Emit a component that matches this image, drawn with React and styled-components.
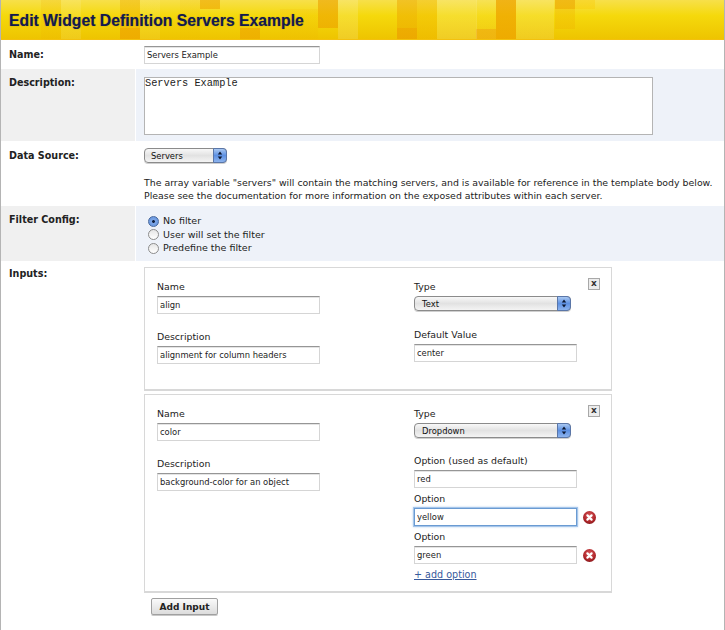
import React from 'react';
import styled, { createGlobalStyle } from 'styled-components';

const Global = createGlobalStyle`
  html, body { margin: 0; padding: 0; background: #fff; }
  body { font-family: "DejaVu Sans", Verdana, sans-serif; font-size: 9.4px; color: #222; }
`;

const blocks = [
  // x, y, w, h, colour
  [41, 0, 20, 39, 'rgba(240,175,0,0.18)'],
  [61, 0, 20, 39, 'rgba(255,255,255,0.1)'],
  [120, 0, 20, 28, 'rgba(240,170,0,0.4)'],
  [120, 28, 20, 11, 'rgba(238,160,0,0.65)'],
  [140, 0, 20, 39, 'rgba(255,255,255,0.08)'],
  [180, 0, 20, 39, 'rgba(240,175,0,0.12)'],
  [200, 0, 20, 9, 'rgba(238,165,0,0.6)'],
  [240, 28, 20, 11, 'rgba(238,160,0,0.55)'],
  [280, 9, 38, 30, 'rgba(240,175,0,0.14)'],
  [318, 0, 20, 28, 'rgba(236,160,0,0.6)'],
  [338, 0, 20, 39, 'rgba(255,255,255,0.14)'],
  [397, 0, 20, 28, 'rgba(236,165,0,0.5)'],
  [397, 28, 20, 11, 'rgba(236,155,0,0.65)'],
  [417, 0, 20, 39, 'rgba(240,175,0,0.35)'],
  [437, 0, 40, 39, 'rgba(255,255,255,0.14)'],
  [476, 0, 20, 39, 'rgba(255,255,255,0.06)'],
  [476, 29, 20, 10, 'rgba(238,160,0,0.55)'],
  [496, 0, 20, 39, 'rgba(238,160,0,0.7)'],
  [516, 0, 38, 39, 'rgba(255,255,255,0.12)'],
  [555, 0, 20, 9, 'rgba(238,170,0,0.7)'],
  [555, 9, 20, 20, 'rgba(240,180,0,0.35)'],
  [575, 0, 20, 9, 'rgba(250,200,0,0.35)'],
];
const bannerLayers = blocks
  .map(([x, y, w, h, c]) => `linear-gradient(${c}, ${c}) ${x - 1}px ${y}px / ${w}px ${h}px no-repeat`)
  .join(',');

const Page = styled.div`
  width: 725px;
  height: 630px;
  overflow: hidden;
  box-sizing: border-box;
  border-left: 1px solid #b4b4b4;
  border-right: 1px solid #b4b4b4;
`;
const Banner = styled.header`
  height: 40px;
  box-sizing: border-box;
  padding: 11px 0 0 8px;
  background: ${bannerLayers}, linear-gradient(#f7e04a 0, #f5d90c 40%, #eec400 100%);
  border-bottom: 1px solid #f3c10e;
`;
const Title = styled.h1`
  margin: 0;
  font: bold 15.75px/20px "Liberation Sans", Arial, sans-serif;
  color: #141a4e;
  text-shadow: 0 0 1px rgba(20, 26, 78, 0.45);
`;
const Row = styled.div`
  display: grid;
  grid-template-columns: 134px 1fr;
  column-gap: 1px;
  height: ${p => p.$h}px;
`;
const Label = styled.div`
  padding: ${p => p.$top || 9}px 0 0 8px;
  font-weight: bold;
  font-size: 9.6px;
  line-height: 12px;
  color: #222;
  background: ${p => (p.$alt ? '#f0f0f0' : '#fff')};
`;
const Value = styled.div`
  padding: ${p => p.$top || 0}px 0 0 8px;
  background: ${p => (p.$alt ? '#eef2f9' : '#fff')};
  box-sizing: border-box;
`;
const TextBox = styled.input`
  display: block;
  box-sizing: border-box;
  width: ${p => p.$w || 163}px;
  height: 18px;
  padding: 0 0 0 2px;
  margin: 0;
  font: 8.4px "DejaVu Sans", sans-serif;
  color: #222;
  background: #fff;
  outline: none;
  border: 1px solid #d5d5d5;
  border-top: 1px solid #969696;
  box-shadow: inset 0 1px 0 #e4e4e4;
  ${p => p.$focus && `
    border: 1px solid #6a9bd2;
    box-shadow: 0 0 0 1px #a5c5ea, 0 0 2px 1px #b9d3f0;
  `}
`;
const Area = styled.div`
  width: 509px;
  height: 58px;
  box-sizing: border-box;
  background: #fff;
  border: 1px solid #b4b4b4;
  font: 10.3px/11px "Liberation Mono", "DejaVu Sans Mono", monospace;
  color: #222;
`;
const Select = styled.div`
  position: relative;
  width: ${p => p.$w}px;
  height: 15px;
  box-sizing: border-box;
  padding-left: ${p => p.$pad || 7}px;
  font-size: 8.4px;
  line-height: 14px;
  color: #111;
  border: 1px solid #8b8b8b;
  border-radius: 4px;
  background: linear-gradient(#f8f8f8 0, #e2e2e2 50%, #f4f4f4 100%);
  box-shadow: 0 1px 0 #cfcfcf;
`;
const SelectCap = styled.span`
  position: absolute;
  top: -1px;
  right: -1px;
  bottom: -1px;
  width: 14px;
  border-radius: 0 4px 4px 0;
  background: linear-gradient(#a9c8f2 0, #5d90e2 50%, #8db4ee 100%);
  border: 1px solid #5a76a8;
  box-sizing: border-box;
  display: flex;
  align-items: center;
  justify-content: center;
`;
const Help = styled.p`
  margin: 13px 0 0;
  font-size: 9.38px;
  line-height: 13px;
  white-space: nowrap;
  color: #222;
`;
const RadioList = styled.div`
  display: flex;
  flex-direction: column;
`;
const RadioRow = styled.div`
  display: flex;
  align-items: center;
  height: 13.5px;
  padding-left: 4px;
  gap: 4px;
  font-size: 9.5px;
  color: #222;
`;
const Dot = styled.span`
  width: 11px;
  height: 11px;
  box-sizing: border-box;
  border-radius: 50%;
  border: 1px solid ${p => (p.$on ? '#48689c' : '#8c8c8c')};
  background: ${p => (p.$on ? 'radial-gradient(circle, #102040 0, #102040 18%, #7fa7e6 26%, #5c8fdf 100%)' : 'linear-gradient(#e6e6e6, #fff)')};
  margin-top: 1px;
`;
const Card = styled.section`
  position: relative;
  width: 468px;
  height: ${p => p.$h}px;
  box-sizing: border-box;
  margin-bottom: 3px;
  padding: 13px 0 0 12px;
  display: grid;
  grid-template-columns: 257px 1fr;
  background: #fff;
  border: 1px solid #d8d8d8;
  border-bottom-width: 2px;
`;
const Col = styled.div`
  display: flex;
  flex-direction: column;
`;
const Field = styled.div`
  margin-bottom: ${p => p.$mb ?? 17}px;
`;
const FieldLabel = styled.div`
  font-size: 9.4px;
  line-height: 12px;
  margin-bottom: 3px;
  color: #222;
`;
const FieldLine = styled.div`
  display: flex;
  align-items: center;
  gap: 6px;
`;
const CloseBox = styled.span`
  position: absolute;
  top: 10px;
  right: 11px;
  width: 12px;
  height: 12px;
  box-sizing: border-box;
  border: 1px solid #a8a8a8;
  background: #ececec;
  font-size: 9px;
  font-weight: bold;
  line-height: 9px;
  text-align: center;
  color: #333;
`;
const AddLink = styled.a`
  font-size: 9.6px;
  line-height: 12px;
  color: #385a9c;
  text-decoration: underline;
  margin-top: 5px;
`;
const AddButton = styled.button`
  display: block;
  margin: 5px 0 0 7px;
  width: 67px;
  height: 17px;
  padding: 0;
  font: bold 9px "DejaVu Sans", sans-serif;
  color: #222;
  background: linear-gradient(#fafafa, #dcdcdc);
  border: 1px solid #a0a0a0;
  border-radius: 2px;
  box-shadow: 0 1px 0 #c8c8c8;
`;

const Stepper = () => (
  <SelectCap>
    <svg width="6" height="9" viewBox="0 0 6 9">
      <path d="M3 0.5 L5.2 3.5 H0.8 Z M3 8.5 L5.2 5.5 H0.8 Z" fill="#0c1730" />
    </svg>
  </SelectCap>
);

const Remove = () => (
  <svg width="13" height="13" viewBox="0 0 13 13">
    <defs>
      <radialGradient id="rm" cx="50%" cy="35%" r="70%">
        <stop offset="0" stopColor="#d8565a" />
        <stop offset="0.7" stopColor="#ac2428" />
        <stop offset="1" stopColor="#7e1518" />
      </radialGradient>
    </defs>
    <circle cx="6.5" cy="6.5" r="6.5" fill="url(#rm)" />
    <path d="M4.4 4.4 L8.6 8.6 M8.6 4.4 L4.4 8.6" stroke="#fff" strokeWidth="2.2" strokeLinecap="round" />
  </svg>
);

export default function App() {
  return (
    <Page>
      <Global />
      <Banner><Title>Edit Widget Definition Servers Example</Title></Banner>
      <Row $h={29}>
        <Label>Name:</Label>
        <Value $top={6}><TextBox $w={176} readOnly value="Servers Example" /></Value>
      </Row>
      <Row $h={72}>
        <Label $alt $top={8}>Description:</Label>
        <Value $alt $top={8}><Area>Servers Example</Area></Value>
      </Row>
      <Row $h={65}>
        <Label $top={9}>Data Source:</Label>
        <Value $top={7}>
          <Select $w={83} $pad={6}>Servers<Stepper /></Select>
          <Help>The array variable "servers" will contain the matching servers, and is available for reference in the template body below.<br />Please see the documentation for more information on the exposed attributes within each server.</Help>
        </Value>
      </Row>
      <Row $h={55}>
        <Label $alt $top={8}>Filter Config:</Label>
        <Value $alt $top={8}>
          <RadioList>
            <RadioRow><Dot $on />No filter</RadioRow>
            <RadioRow><Dot />User will set the filter</RadioRow>
            <RadioRow><Dot />Predefine the filter</RadioRow>
          </RadioList>
        </Value>
      </Row>
      <Row $h={369}>
        <Label $top={7}>Inputs:</Label>
        <Value $top={6}>
          <Card $h={124}>
            <CloseBox>x</CloseBox>
            <Col>
              <Field><FieldLabel>Name</FieldLabel><TextBox readOnly value="align" /></Field>
              <Field><FieldLabel>Description</FieldLabel><TextBox readOnly value="alignment for column headers" /></Field>
            </Col>
            <Col>
              <Field $mb={18}><FieldLabel>Type</FieldLabel><Select $w={157}>Text<Stepper /></Select></Field>
              <Field><FieldLabel>Default Value</FieldLabel><TextBox readOnly value="center" /></Field>
            </Col>
          </Card>
          <Card $h={199}>
            <CloseBox>x</CloseBox>
            <Col>
              <Field><FieldLabel>Name</FieldLabel><TextBox readOnly value="color" /></Field>
              <Field><FieldLabel>Description</FieldLabel><TextBox readOnly value="background-color for an object" /></Field>
            </Col>
            <Col>
              <Field $mb={17}><FieldLabel>Type</FieldLabel><Select $w={157}>Dropdown<Stepper /></Select></Field>
              <Field $mb={5}><FieldLabel>Option (used as default)</FieldLabel><TextBox readOnly value="red" /></Field>
              <Field $mb={5}><FieldLabel>Option</FieldLabel><FieldLine><TextBox $focus readOnly value="yellow" /><Remove /></FieldLine></Field>
              <Field $mb={0}><FieldLabel>Option</FieldLabel><FieldLine><TextBox readOnly value="green" /><Remove /></FieldLine></Field>
              <AddLink>+ add option</AddLink>
            </Col>
          </Card>
          <AddButton>Add Input</AddButton>
        </Value>
      </Row>
    </Page>
  );
}
